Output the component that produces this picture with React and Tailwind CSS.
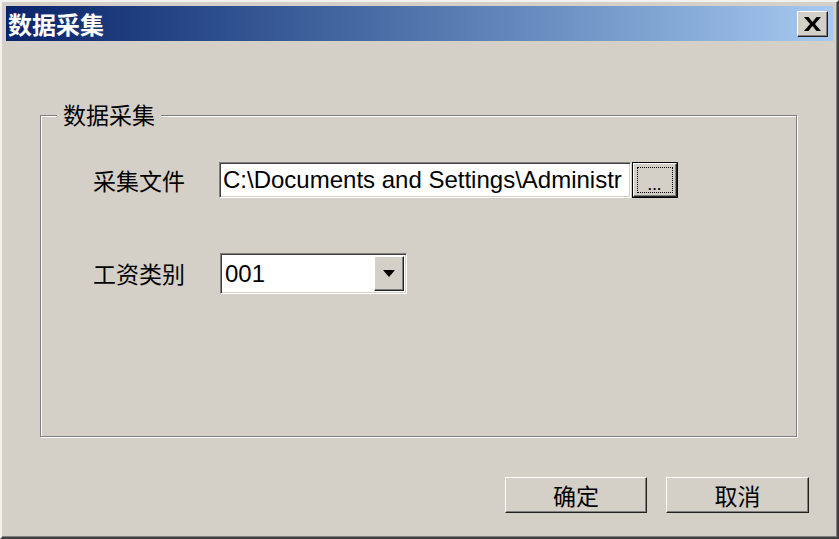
import React from 'react';

const cjk = { fontFamily: '"Noto Sans CJK SC", "Liberation Sans", sans-serif' };
const latin = { fontFamily: '"Liberation Sans", "Noto Sans CJK SC", sans-serif' };

// raised win2k button edges
const raised =
  'bg-[#d4d0c8] border-t border-l border-t-white border-l-white border-r border-b border-r-[#202020] border-b-[#202020] shadow-[inset_-1px_-1px_0_#808080]';

const PushButton = ({ children, className = '' }) => (
  <button
    className={`${raised} flex items-center justify-center text-[23px] text-black leading-none ${className}`}
    style={cjk}
  >
    {children}
  </button>
);

export default function App() {
  return (
    <div className="w-[839px] h-[539px] bg-[#d4d0c8] border-t-2 border-l-2 border-t-[#f2f1ee] border-l-[#f2f1ee] border-r-2 border-b-2 border-r-[#404040] border-b-[#404040] shadow-[inset_-1px_-1px_0_#808080] p-[4px] flex flex-col overflow-hidden">
      {/* title bar */}
      <div className="h-[35px] shrink-0 flex items-center justify-between bg-gradient-to-r from-[#0a246a] to-[#a6caf0]">
        <span className="pl-[2px] text-white font-bold text-[24px] leading-none" style={cjk}>
          数据采集
        </span>
        <button className={`${raised} w-[31px] h-[26px] mr-[5px] flex items-center justify-center`}>
          <svg width="17" height="14" viewBox="0 0 17 14">
            <path d="M0 0 L4.5 0 L8.5 5 L12.5 0 L17 0 L11 7 L17 14 L12.5 14 L8.5 9 L4.5 14 L0 14 L6 7 Z" fill="#000" />
          </svg>
        </button>
      </div>

      {/* group box */}
      <div className="relative mt-[74px] ml-[34px] mr-[36px] h-[322px] shrink-0 border border-[#808080] shadow-[inset_1px_1px_0_#fff,1px_1px_0_#fff]">
        <span
          className="absolute left-[16px] -top-[16px] px-[6px] bg-[#d4d0c8] text-[23px] leading-[28px] text-black"
          style={cjk}
        >
          数据采集
        </span>

        <div className="pt-[46px] pl-[52px] flex flex-col">
          <div className="flex items-center">
            <span className="w-[126px] text-[23px] text-black leading-none" style={cjk}>
              采集文件
            </span>
            <div className="w-[412px] h-[36px] bg-white border-t border-l border-t-[#808080] border-l-[#808080] border-r border-b border-r-white border-b-white shadow-[inset_1px_1px_0_#404040,inset_-1px_-1px_0_#d4d0c8] flex items-center pl-[3px] overflow-hidden whitespace-nowrap">
              <span className="text-[24px] leading-none text-black" style={latin}>
                C:\Documents and Settings\Administr
              </span>
            </div>
            <button className="ml-[1px] w-[46px] h-[36px] border border-black bg-[#d4d0c8] p-0">
              <div className={`${raised} w-full h-full p-[3px]`}>
                <div className="w-full h-full border border-dotted border-black flex items-end justify-center">
                  <span className="text-[13px] leading-[12px] tracking-[1px] font-bold text-black" style={latin}>
                    ...
                  </span>
                </div>
              </div>
            </button>
          </div>

          <div className="flex items-center mt-[55px]">
            <span className="w-[127px] text-[23px] text-black leading-none" style={cjk}>
              工资类别
            </span>
            <div className="w-[187px] h-[41px] bg-white border-t border-l border-t-[#808080] border-l-[#808080] border-r border-b border-r-white border-b-white shadow-[inset_1px_1px_0_#404040,inset_-1px_-1px_0_#d4d0c8] flex items-center p-[2px]">
              <span className="flex-1 pl-[2px] text-[24px] leading-none text-black" style={latin}>
                001
              </span>
              <div className={`${raised} w-[30px] h-full flex items-center justify-center`}>
                <svg width="12" height="7" viewBox="0 0 12 7">
                  <path d="M0 0 L12 0 L6 7 Z" fill="#000" />
                </svg>
              </div>
            </div>
          </div>
        </div>
      </div>

      {/* action buttons */}
      <div className="mt-[40px] flex justify-end gap-[19px] pr-[24px]">
        <PushButton className="w-[142px] h-[36px]">确定</PushButton>
        <PushButton className="w-[143px] h-[36px]">取消</PushButton>
      </div>
    </div>
  );
}
